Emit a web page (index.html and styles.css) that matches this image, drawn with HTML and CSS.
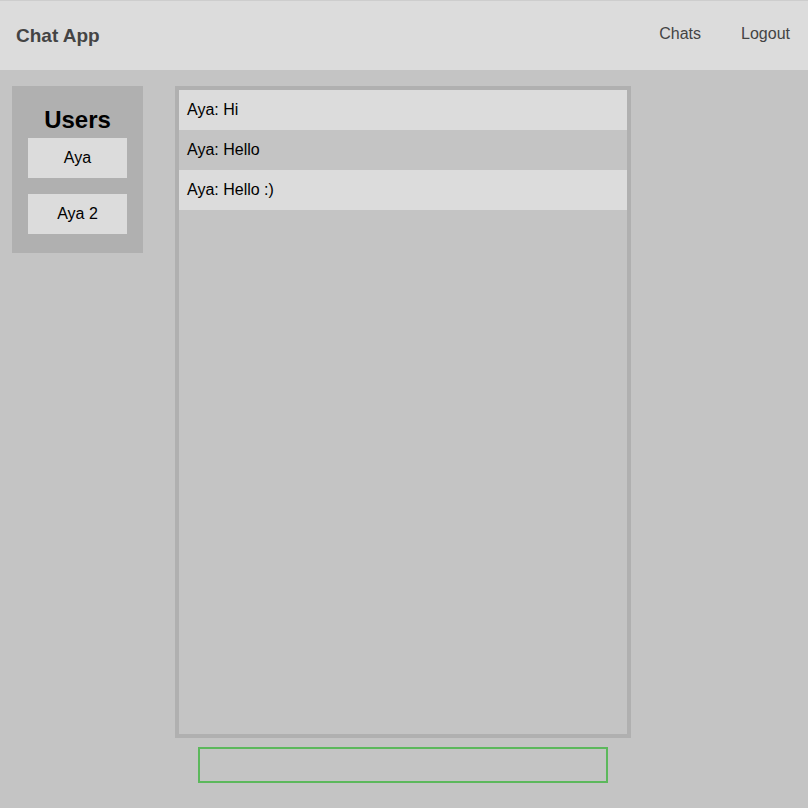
FILE: index.html
```html
<!DOCTYPE html>
<html>
<head>
<meta charset="utf-8">
<link rel="stylesheet" href="styles.css">
</head>
<body>
<header class="topbar">
  <div class="brand">Chat App</div>
  <nav class="nav">
    <a class="nav-link" href="#">Chats</a>
    <a class="nav-link" href="#">Logout</a>
  </nav>
</header>
<main class="main">
  <aside class="users">
    <h2 class="users-title">Users</h2>
    <div class="user-btn">Aya</div>
    <div class="user-btn">Aya 2</div>
  </aside>
  <section class="chat">
    <div class="chat-box">
      <div class="msg">Aya: Hi</div>
      <div class="msg">Aya: Hello</div>
      <div class="msg">Aya: Hello :)</div>
    </div>
    <input class="chat-input" type="text">
  </section>
</main>
</body>
</html>
```
FILE: styles.css
```css
html, body {
  margin: 0;
  padding: 0;
}
body {
  background: #c4c4c4;
  font-family: "Liberation Sans", Arial, sans-serif;
  font-size: 16px;
  color: #000;
  width: 808px;
  height: 808px;
  overflow: hidden;
}
.topbar {
  box-sizing: border-box;
  height: 70px;
  background: #dcdcdc;
  border-top: 1px solid #cdcdcd;
  display: flex;
  justify-content: space-between;
  align-items: flex-start;
}
.brand {
  font-size: 19px;
  font-weight: bold;
  color: #444;
  margin-left: 16px;
  margin-top: 24px;
}
.nav {
  display: flex;
  gap: 40px;
  margin-right: 18px;
  margin-top: 24px;
}
.nav-link {
  color: #444;
  text-decoration: none;
  font-size: 16px;
}
.main {
  display: flex;
  align-items: flex-start;
  padding-top: 16px;
}
.users {
  margin-left: 12px;
  width: 131px;
  height: 167px;
  box-sizing: border-box;
  background: #b0b0b0;
  display: flex;
  flex-direction: column;
  align-items: center;
  padding-top: 19px;
}
.users-title {
  margin: 0;
  font-size: 24px;
  font-weight: bold;
  line-height: 30px;
  margin-bottom: 3px;
}
.user-btn {
  width: 99px;
  height: 40px;
  background: #dcdcdc;
  display: flex;
  align-items: center;
  justify-content: center;
  margin-bottom: 16px;
}
.chat {
  margin-left: 32px;
  width: 456px;
  display: flex;
  flex-direction: column;
  align-items: center;
}
.chat-box {
  box-sizing: border-box;
  width: 456px;
  height: 652px;
  border: 4px solid #b0b0b0;
  background: #c4c4c4;
}
.msg {
  height: 40px;
  padding-left: 8px;
  display: flex;
  align-items: center;
}
.msg:nth-child(odd) {
  background: #dcdcdc;
}
.chat-input {
  box-sizing: border-box;
  margin-top: 9px;
  width: 410px;
  height: 36px;
  border: 2px solid #5cb85c;
  background: transparent;
  outline: none;
  padding: 0 8px;
  font-family: inherit;
  font-size: 16px;
}
```
